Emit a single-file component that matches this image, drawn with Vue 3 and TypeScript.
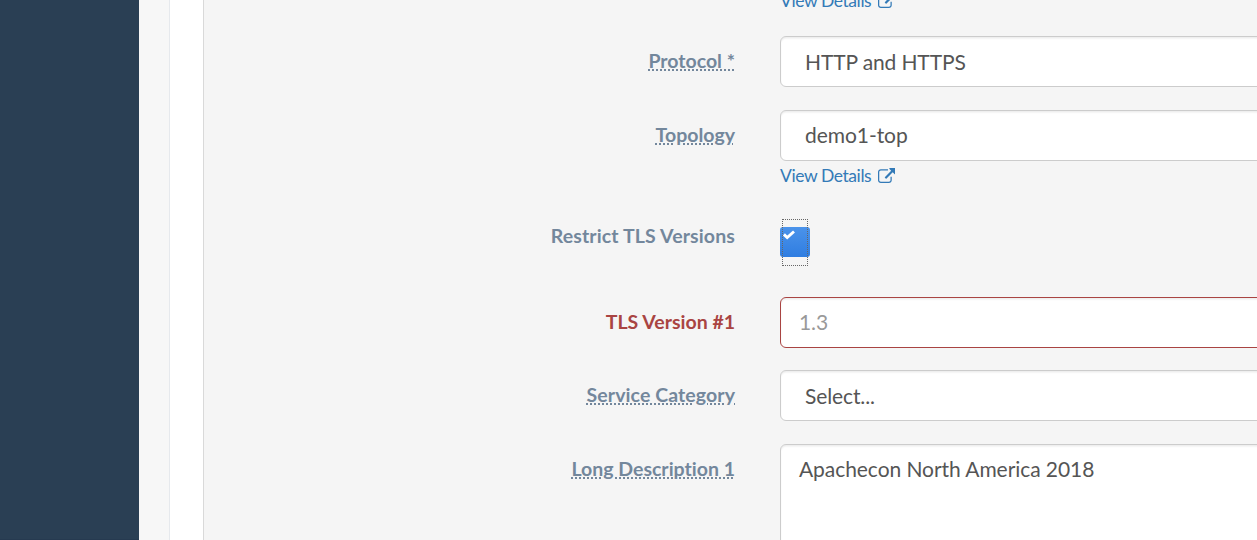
<script setup lang="ts">
interface Field {
  id: string
  label: string
  kind: 'select' | 'input' | 'area' | 'check'
  value?: string
  hint?: boolean
  error?: boolean
  link?: boolean
}

const fields: Field[] = [
  { id: 'protocol', label: 'Protocol *', kind: 'select', value: 'HTTP and HTTPS', hint: true },
  { id: 'topology', label: 'Topology', kind: 'select', value: 'demo1-top', hint: true, link: true },
  { id: 'restrict', label: 'Restrict TLS Versions', kind: 'check' },
  { id: 'tls', label: 'TLS Version #1', kind: 'input', value: '1.3', error: true },
  { id: 'category', label: 'Service Category', kind: 'select', value: 'Select...', hint: true },
  { id: 'description', label: 'Long Description 1', kind: 'area', value: 'Apachecon North America 2018', hint: true },
]

const linkIcon =
  'M1408 928v320q0 119-84.5 203.5T1120 1536H288q-119 0-203.5-84.5T0 1248V416q0-119 84.5-203.5T288 128h704q14 0 23 9t9 23v64q0 14-9 23t-23 9H288q-66 0-113 47t-47 113v832q0 66 47 113t113 47h832q66 0 113-47t47-113V928q0-14 9-23t23-9h64q14 0 23 9t9 23zm384-864v512q0 26-19 45t-45 19-45-19l-176-176-652 652q-10 10-23 10t-23-10L695 983q-10-10-10-23t10-23l652-652-176-176q-19-19-19-45t19-45 45-19h512q26 0 45 19t19 45z'
</script>

<template>
  <div class="page">
    <aside class="sidebar"></aside>
    <main class="content">
      <section class="card">
        <form class="form" @submit.prevent>
          <div class="row previous">
            <div class="label"></div>
            <div class="control">
              <a class="details"><span>View Details</span><svg viewBox="0 0 1792 1664"><path :d="linkIcon" /></svg></a>
            </div>
          </div>
          <div v-for="f in fields" :key="f.id" class="row" :class="[f.id, { error: f.error }]">
            <div class="label"><span :class="{ hint: f.hint }">{{ f.label }}</span></div>
            <div class="control">
              <div v-if="f.kind === 'check'" class="checkbox">
                <svg viewBox="0 0 12 10"><path d="M.9 4.4 4.2 7.5 11 1.5" /></svg>
                <i class="focus"></i>
              </div>
              <div v-else class="field" :class="f.kind">{{ f.value }}</div>
              <a v-if="f.link" class="details"><span>View Details</span><svg viewBox="0 0 1792 1664"><path :d="linkIcon" /></svg></a>
            </div>
          </div>
        </form>
      </section>
    </main>
  </div>
</template>

<style>
body {
  overflow: hidden;
}
</style>

<style scoped>
.page {
  display: flex;
  height: 540px;
  overflow: hidden;
  font-family: Lato, sans-serif;
  font-variant-ligatures: none;
  color: #555;
}
.sidebar {
  flex: 0 0 139px;
  box-sizing: border-box;
  background: #2a3f54;
  border-bottom: 1px solid #263a50;
}
.content {
  flex: 1;
  min-width: 0;
  padding-left: 30px;
  background: #f7f7f7;
}
.card {
  height: 540px;
  box-sizing: border-box;
  border-left: 1px solid #e6e9ed;
  padding-left: 33px;
  background: #fff;
}
.form {
  height: 540px;
  box-sizing: border-box;
  overflow: hidden;
  border-left: 1px solid #d9d9d9;
  background: #f5f5f5;
}
.row {
  display: flex;
  gap: 45px;
  height: 74px;
}
.row.previous {
  height: 36px;
}
.previous .details {
  margin-top: -12px;
}
.row.topology {
  height: 109px;
}
.row.restrict {
  height: 78px;
}
.row.tls {
  height: 73px;
}
.label {
  flex: 0 0 531px;
  padding-top: 11px;
  text-align: right;
  font-size: 19.5px;
  line-height: 27px;
  font-weight: 700;
  color: #73879c;
  white-space: nowrap;
}
.restrict .label {
  padding-top: 3px;
  letter-spacing: 0.13px;
}
.category .label {
  letter-spacing: 0.08px;
}
.hint {
  text-decoration: underline dotted;
  text-decoration-thickness: 2px;
  text-underline-offset: 0.5px;
}
.error .label {
  color: #a94442;
}
.control {
  flex: 1;
  min-width: 0;
}
.field {
  width: 600px;
  height: 51px;
  box-sizing: border-box;
  border: 1px solid #ccc;
  border-radius: 6px;
  box-shadow: inset 0 1.5px 1.5px rgba(0, 0, 0, 0.075);
  background: #fff;
  padding: 10px 24px;
  font-size: 21px;
  line-height: 30px;
  letter-spacing: -0.12px;
  white-space: nowrap;
}
.topology .field,
.field.input,
.field.area {
  padding-top: 9px;
}
.topology .field,
.field.area {
  letter-spacing: -0.06px;
}
.field.input,
.field.area {
  padding-left: 18px;
}
.field.area {
  height: 130px;
}
.error .field {
  border-color: #a94442;
  color: #999;
}
.details {
  display: flex;
  align-items: center;
  gap: 6.5px;
  margin-top: 2px;
  font-size: 17.5px;
  line-height: 26px;
  letter-spacing: -0.42px;
  color: #337ab7;
}
.details svg {
  width: 17.5px;
  height: 16.25px;
  fill: currentColor;
}
.checkbox {
  position: relative;
  width: 30px;
  height: 30px;
  margin-top: 8px;
  border-radius: 3px;
  background: linear-gradient(#4b93ea, #2f7de1);
}
.checkbox svg {
  position: absolute;
  left: 3px;
  top: 3px;
  width: 12px;
  height: 10px;
  overflow: visible;
  fill: none;
  stroke: #fff;
  stroke-width: 2.9;
}
.focus {
  position: absolute;
  left: 2px;
  top: -8px;
  width: 24px;
  height: 45px;
  border: 1px dotted #666;
}
</style>
